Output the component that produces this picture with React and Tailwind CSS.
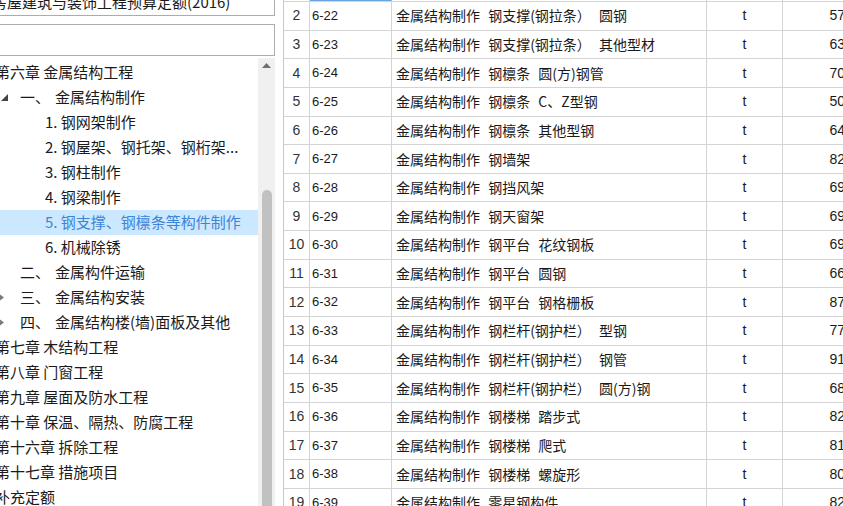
import React from 'react';

const treeFont = { fontFamily: '"Noto Sans CJK SC", "Noto Sans", sans-serif' };

// tree nodes: level 0 = chapter, 1 = section, 2 = item
const tree = [
    { text: '第六章 金属结构工程', level: 0 },
    { text: '金属结构制作', num: '一、', level: 1, arrow: 'open' },
    { text: '1. 钢网架制作', level: 2 },
    { text: '2. 钢屋架、钢托架、钢桁架...', level: 2 },
    { text: '3. 钢柱制作', level: 2 },
    { text: '4. 钢梁制作', level: 2 },
    { text: '5. 钢支撑、钢檩条等构件制作', level: 2, active: true },
    { text: '6. 机械除锈', level: 2 },
    { text: '金属构件运输', num: '二、', level: 1 },
    { text: '金属结构安装', num: '三、', level: 1, arrow: 'closed' },
    { text: '金属结构楼(墙)面板及其他', num: '四、', level: 1, arrow: 'closed' },
    { text: '第七章 木结构工程', level: 0 },
    { text: '第八章 门窗工程', level: 0 },
    { text: '第九章 屋面及防水工程', level: 0 },
    { text: '第十章 保温、隔热、防腐工程', level: 0 },
    { text: '第十六章 拆除工程', level: 0 },
    { text: '第十七章 措施项目', level: 0 },
    { text: '补充定额', level: 0 },
];

const rows = [
    [1, '6-21', '金属结构制作 钢支撑(钢拉条） 角钢', '61'],
    [2, '6-22', '金属结构制作 钢支撑(钢拉条） 圆钢', '57'],
    [3, '6-23', '金属结构制作 钢支撑(钢拉条） 其他型材', '63'],
    [4, '6-24', '金属结构制作 钢檩条 圆(方)钢管', '70'],
    [5, '6-25', '金属结构制作 钢檩条 C、Z型钢', '50'],
    [6, '6-26', '金属结构制作 钢檩条 其他型钢', '64'],
    [7, '6-27', '金属结构制作 钢墙架', '82'],
    [8, '6-28', '金属结构制作 钢挡风架', '69'],
    [9, '6-29', '金属结构制作 钢天窗架', '69'],
    [10, '6-30', '金属结构制作 钢平台 花纹钢板', '69'],
    [11, '6-31', '金属结构制作 钢平台 圆钢', '66'],
    [12, '6-32', '金属结构制作 钢平台 钢格栅板', '87'],
    [13, '6-33', '金属结构制作 钢栏杆(钢护栏） 型钢', '77'],
    [14, '6-34', '金属结构制作 钢栏杆(钢护栏） 钢管', '91'],
    [15, '6-35', '金属结构制作 钢栏杆(钢护栏） 圆(方)钢', '68'],
    [16, '6-36', '金属结构制作 钢楼梯 踏步式', '82'],
    [17, '6-37', '金属结构制作 钢楼梯 爬式', '81'],
    [18, '6-38', '金属结构制作 钢楼梯 螺旋形', '80'],
    [19, '6-39', '金属结构制作 零星钢构件', '82'],
];

const TreeRow = ({ node }) => {
    const color = node.active ? 'text-[#3d84d6]' : 'text-[#1a1a1a]';
    return (
        <div
            className={`relative flex items-center h-[25px] whitespace-nowrap text-[15px] ${color} ${node.active ? 'bg-[#cce8ff]' : ''}`}
        >
            {node.level === 0 && <span className="ml-[-5px]">{node.text}</span>}
            {node.level === 1 && (
                <>
                    {node.arrow === 'open' && (
                        <svg className="absolute left-[1px] top-[9px]" width="7" height="7" viewBox="0 0 7 7">
                            <path d="M7 0 L7 7 L0 7 Z" fill="#444" />
                        </svg>
                    )}
                    {node.arrow === 'closed' && (
                        <svg className="absolute left-[-2px] top-[8px]" width="7" height="9" viewBox="0 0 7 9">
                            <path d="M0 0 L6 4.5 L0 9 Z" fill="#7a7a7a" />
                        </svg>
                    )}
                    <span className="ml-[20px] w-[35px]">{node.num}</span>
                    <span>{node.text}</span>
                </>
            )}
            {node.level === 2 && <span className="ml-[45px]">{node.text}</span>}
        </div>
    );
};

export default function App() {
    return (
        <div className="flex w-[843px] h-[506px] overflow-hidden bg-white" style={treeFont}>
            {/* Left side: inputs and chapter tree */}
            <div className="flex flex-col w-[275px] shrink-0">
                <div className="h-[16px] border-b border-r border-[#acacac] overflow-hidden">
                    <div className="mt-[-9px] ml-[-8px] text-[15px] text-[#1a1a1a] whitespace-nowrap">
                        房屋建筑与装饰工程预算定额(2016)
                    </div>
                </div>
                <div className="h-[8px]" />
                <div className="h-[32px] border border-l-0 border-[#acacac]" />
                <div className="flex flex-1 mt-[2px] min-h-0">
                    <div className="flex-1 pt-[2px] overflow-hidden">
                        {tree.map((node, i) => (
                            <TreeRow key={i} node={node} />
                        ))}
                    </div>
                    {/* Scrollbar */}
                    <div className="w-[17px] bg-[#f0f0f0] flex flex-col items-center">
                        <svg className="mt-[5px]" width="9" height="5" viewBox="0 0 9 5">
                            <path d="M4.5 0 L9 5 L0 5 Z" fill="#707070" />
                        </svg>
                        <div className="mt-[122px] w-[10px] flex-1 bg-[#c1c1c1] rounded-t-[5px]" />
                    </div>
                </div>
            </div>

            {/* Gap */}
            <div className="w-[8px] shrink-0 bg-white" />

            {/* Right side: quota table */}
            <div
                className="flex-1 overflow-hidden border-l border-[#c8c8c8]"
                style={{ fontFamily: '"Liberation Sans", "Noto Sans CJK SC", sans-serif' }}
            >
                <div className="-mt-[26.65px]">
                    {rows.map(([no, code, name, value]) => (
                        <div key={no} className="flex h-[28.65px] border-b border-[#d4d4d4] text-[14px] text-[#1a1a1a] whitespace-nowrap">
                            <div className="w-[26px] shrink-0 flex items-center justify-center border-r border-[#d4d4d4] text-[#333]">
                                {no}
                            </div>
                            <div
                                className={`w-[82px] shrink-0 flex items-center pl-[2px] text-[13px] border-r border-[#d4d4d4] ${no === 1 ? 'border-b border-b-[#6aa3e0]' : ''}`}
                            >
                                {code}
                            </div>
                            <div className="w-[315px] shrink-0 flex items-center pl-[4px] border-r border-[#d4d4d4] [word-spacing:5px]" style={treeFont}>
                                {name}
                            </div>
                            <div className="w-[76px] shrink-0 flex items-center justify-center border-r border-[#d4d4d4]">
                                t
                            </div>
                            <div className="w-[62px] shrink-0 flex items-center justify-end">
                                {value}
                            </div>
                        </div>
                    ))}
                </div>
            </div>
        </div>
    );
}
